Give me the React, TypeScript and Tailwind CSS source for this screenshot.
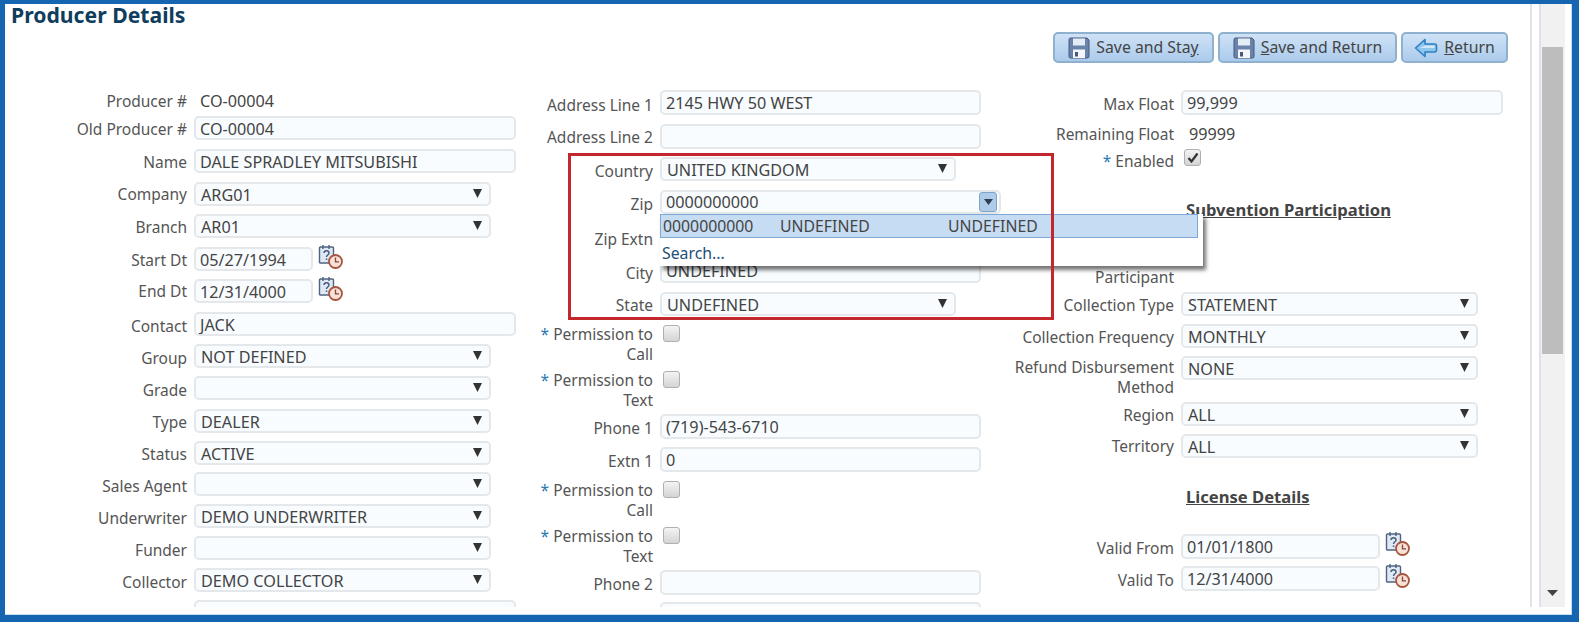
import React from "react";

const font = "font-['Noto_Sans','Liberation_Sans',sans-serif]";

function CalIcon() {
  return (
    <svg width="26" height="26" viewBox="0 0 26 26" className="block">
      <rect x="1.5" y="3" width="14" height="16" rx="1" fill="#dfe9f5" stroke="#4f6480" strokeWidth="1.4" />
      <path d="M5 1v4M11 1v4" stroke="#4f6480" strokeWidth="1.4" />
      <path d="M6 9c0-3 5-3 5 0 0 2-2.500 2-2.500 4M8.500 14.500v1.500" fill="none" stroke="#4a5f7c" strokeWidth="1.5" />
      <circle cx="17.500" cy="17.500" r="6.500" fill="#f6e2d6" stroke="#a9543f" strokeWidth="1.8" />
      <path d="M17.500 13.500v4.300h3.500" fill="none" stroke="#8a4433" strokeWidth="1.3" />
    </svg>
  );
}

function SaveIcon() {
  return (
    <svg width="22" height="22" viewBox="0 0 22 22" className="block shrink-0">
      <path d="M1 2.500Q1 1 2.500 1H19l2 2v16.500q0 1.500-1.500 1.500h-17Q1 21 1 19.500z" fill="#6a83aa" stroke="#46597f" />
      <rect x="5" y="1.500" width="12" height="7" fill="#e4ecf5" />
      <rect x="5" y="12.500" width="12" height="8.500" fill="#f4f6f9" />
      <rect x="7" y="15" width="3" height="4.500" fill="#46597c" />
    </svg>
  );
}

function BackIcon() {
  return (
    <svg width="24" height="22" viewBox="0 0 24 22" className="block shrink-0">
      <path d="M1.500 11 11 2.500V7h9.500q2 0 2 2v4q0 2-2 2H11v4.500z" fill="#8fc6ee" stroke="#2e7fc1" strokeWidth="1.6" strokeLinejoin="round" />
      <path d="M11 8.500h9.500v2.500H6z" fill="#cfe8fa" />
    </svg>
  );
}

function Arrow() {
  return (
    <svg width="9" height="9" viewBox="0 0 9 9" className="block">
      <polygon points="0,0 9,0 4.500,9" fill="#333" />
    </svg>
  );
}

const boxCls =
  "flex items-center border-2 border-[#e4e8eb] bg-[#f8fcff] rounded-[5px] text-[#444] text-[16.2px] overflow-hidden whitespace-nowrap";

function Box({ value, className }: { value?: string; className: string }) {
  return <div className={`${boxCls} pl-[4px] pt-[2px] ${className}`}>{value}</div>;
}

function Select({ value, className }: { value?: string; className: string }) {
  return (
    <div className={`${boxCls} pl-[5px] pr-[7px] pt-[2px] justify-between ${className}`}>
      <span>{value}</span>
      <span className="-mt-[4px]"><Arrow /></span>
    </div>
  );
}

function Check({ checked }: { checked?: boolean }) {
  return (
    <div className="w-[17px] h-[17px] rounded-[3px] border border-[#b0b0b0] bg-gradient-to-b from-[#f4f4f4] to-[#d4d4d4] flex items-center justify-center">
      {checked && (
        <svg width="12" height="11" viewBox="0 0 12 11">
          <path d="M1.500 6 4.500 9.500 10.500 1.500" fill="none" stroke="#333" strokeWidth="2.200" />
        </svg>
      )}
    </div>
  );
}

function Row({
  label,
  labelW,
  h,
  children,
  star,
  pt = "pt-[4px]",
}: {
  label: React.ReactNode;
  labelW: string;
  h: string;
  children?: React.ReactNode;
  star?: boolean;
  pt?: string;
}) {
  return (
    <div className={`flex items-start shrink-0 ${h}`}>
      <div className={`${labelW} ${pt} shrink-0 text-right leading-5 text-[#555]`}>
        {star && <span className="text-[#2a7ab0]">* </span>}
        {label}
      </div>
      <div className="ml-[7px]">{children}</div>
    </div>
  );
}

function Cal({ className }: { className: string }) {
  return <div className={className}><CalIcon /></div>;
}

function Btn({ icon, w, children }: { icon: React.ReactNode; w: string; children: React.ReactNode }) {
  return (
    <div className={`${w} h-[31px] flex items-center justify-center gap-[6px] rounded-[5px] border-2 border-[#8fb0cf] bg-gradient-to-b from-[#cfe2f6] to-[#abcbec] text-[#444] text-[15.8px]`}>
      {icon}
      <span>{children}</span>
    </div>
  );
}

function ColOne() {
  const w = "w-[182px]";
  const p3 = "pt-[3px]";
  const sel = "w-[297px] h-[24px]";
  const txt = "w-[322px] h-[24px]";
  return (
    <div className="w-[529px] shrink-0">
      <Row label="Producer #" labelW={w} h="h-[28px]" pt={p3}>
        <div className="pl-[6px] pt-[3px] leading-5 text-[#444] text-[16.2px]">CO-00004</div>
      </Row>
      <Row label="Old Producer #" labelW={w} h="h-[33px]" pt={p3}><Box value="CO-00004" className={txt} /></Row>
      <Row label="Name" labelW={w} h="h-[33px]" pt={p3}><Box value="DALE SPRADLEY MITSUBISHI" className={txt} /></Row>
      <Row label="Company" labelW={w} h="h-[32px]" pt="pt-[2px]"><Select value="ARG01" className={sel} /></Row>
      <Row label="Branch" labelW={w} h="h-[33px]" pt={p3}><Select value="AR01" className={sel} /></Row>
      <Row label="Start Dt" labelW={w} h="h-[32px]" pt={p3}>
        <div className="flex items-start">
          <Box value="05/27/1994" className="w-[119px] h-[24px]" />
          <Cal className="ml-[5px] -mt-[3px]" />
        </div>
      </Row>
      <Row label="End Dt" labelW={w} h="h-[33px]" pt="pt-[2px]">
        <div className="flex items-start">
          <Box value="12/31/4000" className="w-[119px] h-[24px]" />
          <Cal className="ml-[5px] -mt-[3px]" />
        </div>
      </Row>
      <Row label="Contact" labelW={w} h="h-[32px]"><Box value="JACK" className={txt} /></Row>
      <Row label="Group" labelW={w} h="h-[32px]"><Select value="NOT DEFINED" className={sel} /></Row>
      <Row label="Grade" labelW={w} h="h-[33px]"><Select className={sel} /></Row>
      <Row label="Type" labelW={w} h="h-[32px]" pt={p3}><Select value="DEALER" className={sel} /></Row>
      <Row label="Status" labelW={w} h="h-[31px]" pt={p3}><Select value="ACTIVE" className={sel} /></Row>
      <Row label="Sales Agent" labelW={w} h="h-[32px]"><Select className={sel} /></Row>
      <Row label="Underwriter" labelW={w} h="h-[32px]"><Select value="DEMO UNDERWRITER" className={sel} /></Row>
      <Row label="Funder" labelW={w} h="h-[32px]"><Select className={sel} /></Row>
      <Row label="Collector" labelW={w} h="h-[32px]"><Select value="DEMO COLLECTOR" className={sel} /></Row>
      <Row label="" labelW={w} h="h-[33px]"><Box className={txt} /></Row>
    </div>
  );
}

function ZipPopup() {
  return (
    <div className="absolute left-0 top-[24px] w-[543px] h-[52px] bg-white z-10 shadow-[3px_4px_4px_rgba(0,0,0,0.55)] text-[15.8px]">
      <div className="h-[24px] w-[538px] flex items-center bg-[#c6dcf2] border border-[#7ea8d8] pl-[2px] pt-[2px] text-[#444] whitespace-nowrap">
        <span className="w-[117px]">0000000000</span>
        <span className="w-[168px]">UNDEFINED</span>
        <span>UNDEFINED</span>
      </div>
      <div className="pl-[2px] pt-[5px] leading-5 text-[#1f4e79]">Search...</div>
    </div>
  );
}

function ColTwo() {
  const w = "w-[119px]";
  const txt = "w-[321px] h-[25px]";
  const sel = "w-[296px] h-[24px]";
  return (
    <div className="w-[476px] shrink-0 pt-[2px]">
      <Row label="Address Line 1" labelW={w} h="h-[34px]" pt="pt-[5px]"><Box value="2145 HWY 50 WEST" className={txt} /></Row>
      <Row label="Address Line 2" labelW={w} h="h-[33px]" pt="pt-[3px]"><Box className={txt} /></Row>
      <div className="relative">
        <div className="absolute left-[34px] top-[-4px] w-[486px] h-[167px] border-[3px] border-[#c1272d] z-20" />
        <Row label="Country" labelW={w} h="h-[33px]"><Select value="UNITED KINGDOM" className={sel} /></Row>
        <Row label="Zip" labelW={w} h="h-[36px]">
          <div className="relative">
            <div className={`${boxCls} w-[341px] h-[24px] pl-[4px] pr-[1px] pt-[1px] justify-between`}>
              <span>0000000000</span>
              <span className="w-[18px] h-[20px] mr-[1px] -mt-[1px] rounded-[3px] border border-[#7fa4cc] bg-[#aecbea] flex items-center justify-center">
                <svg width="9" height="6" viewBox="0 0 9 6"><polygon points="0,0 9,0 4.500,6" fill="#2d3e50" /></svg>
              </span>
            </div>
            <ZipPopup />
          </div>
        </Row>
        <Row label="Zip Extn" labelW={w} h="h-[32px]" pt="pt-[3px]"><Box className={txt} /></Row>
        <Row label="City" labelW={w} h="h-[34px]" pt="pt-[5px]"><Box value="UNDEFINED" className={txt} /></Row>
        <Row label="State" labelW={w} h="h-[32px]" pt="pt-[3px]"><Select value="UNDEFINED" className={sel} /></Row>
      </div>
      <Row star label={<>Permission to<br />Call</>} labelW={w} h="h-[46px]" pt="pt-0"><div className="ml-[3px] pt-[1px]"><Check /></div></Row>
      <Row star label={<>Permission to<br />Text</>} labelW={w} h="h-[44px]" pt="pt-0"><div className="ml-[3px] pt-[1px]"><Check /></div></Row>
      <Row label="Phone 1" labelW={w} h="h-[33px]"><Box value="(719)-543-6710" className={txt} /></Row>
      <Row label="Extn 1" labelW={w} h="h-[33px]"><Box value="0" className={txt} /></Row>
      <Row star label={<>Permission to<br />Call</>} labelW={w} h="h-[46px]" pt="pt-0"><div className="ml-[3px] pt-[1px]"><Check /></div></Row>
      <Row star label={<>Permission to<br />Text</>} labelW={w} h="h-[44px]" pt="pt-0"><div className="ml-[3px] pt-[1px]"><Check /></div></Row>
      <Row label="Phone 2" labelW={w} h="h-[32px]"><Box className={txt} /></Row>
      <Row label="" labelW={w} h="h-[32px]"><Box className={txt} /></Row>
    </div>
  );
}

function ColThree() {
  const w = "w-[164px]";
  const p3 = "pt-[3px]";
  const sel = "w-[297px] h-[24px]";
  return (
    <div className="w-[500px] shrink-0 pt-[2px]">
      <Row label="Max Float" labelW={w} h="h-[34px]"><Box value="99,999" className="w-[322px] h-[25px]" /></Row>
      <Row label="Remaining Float" labelW={w} h="h-[25px]" pt="pt-0"><div className="pl-[8px] leading-5 text-[#444] text-[16.2px]">99999</div></Row>
      <Row star label="Enabled" labelW={w} h="h-[51px]" pt="pt-[2px]"><div className="ml-[3px]"><Check checked /></div></Row>
      <div className="h-[67px] ml-[176px] leading-5 font-bold underline text-[#444] text-[16.6px]">Subvention Participation</div>
      <Row label="Participant" labelW={w} h="h-[25px]" pt="pt-0" />
      <Row label="Collection Type" labelW={w} h="h-[32px]" pt={p3}><Select value="STATEMENT" className={sel} /></Row>
      <Row label="Collection Frequency" labelW={w} h="h-[32px]" pt={p3}><Select value="MONTHLY" className={sel} /></Row>
      <Row label={<>Refund Disbursement<br />Method</>} labelW={w} h="h-[46px]" pt="pt-[1px]"><Select value="NONE" className={sel} /></Row>
      <Row label="Region" labelW={w} h="h-[32px]" pt={p3}><Select value="ALL" className={sel} /></Row>
      <Row label="Territory" labelW={w} h="h-[53px]" pt="pt-[2px]"><Select value="ALL" className={sel} /></Row>
      <div className="h-[47px] ml-[176px] leading-5 font-bold underline text-[#444] text-[16.6px]">License Details</div>
      <Row label="Valid From" labelW={w} h="h-[32px]">
        <div className="flex items-start"><Box value="01/01/1800" className="w-[199px] h-[25px]" /><Cal className="ml-[5px] -mt-[3px]" /></div>
      </Row>
      <Row label="Valid To" labelW={w} h="h-[32px]">
        <div className="flex items-start"><Box value="12/31/4000" className="w-[199px] h-[25px]" /><Cal className="ml-[5px] -mt-[3px]" /></div>
      </Row>
    </div>
  );
}

export default function App() {
  return (
    <div className={`${font} w-[1579px] h-[622px] border-t-[4px] border-l-[5px] border-r-[7px] border-b-[7px] border-[#1565b0] bg-white text-[15.5px] overflow-hidden shadow-[inset_-1px_-1px_0_#c8dcee]`}>
      <div className="flex h-[603px]">
        <div className="w-[1525px] shrink-0 h-[603px] overflow-hidden">
          <div className="pl-[6px] h-[28px] text-[#0f3d5e] font-bold text-[21.2px] leading-[22px]">Producer Details</div>
          <div className="flex justify-end gap-[4px] pr-[22px] h-[56px]">
            <Btn w="w-[161px]" icon={<SaveIcon />}>
              Save and Sta<span className="underline">y</span>
            </Btn>
            <Btn w="w-[179px]" icon={<SaveIcon />}>
              <span className="underline">S</span>ave and Return
            </Btn>
            <Btn w="w-[107px]" icon={<BackIcon />}>
              <span className="underline">R</span>eturn
            </Btn>
          </div>
          <div className="flex">
            <ColOne />
            <ColTwo />
            <ColThree />
          </div>
        </div>
        <div className="w-[2px] h-[603px] bg-[#dfe3ea] shrink-0" />
        <div className="w-[7px] shrink-0" />
        <div className="w-[26px] h-[603px] shrink-0 bg-[#f1f1f1] border-l-2 border-[#dde2ec] pl-[1px] pr-[2px] flex flex-col items-center">
          <div className="h-[43px] shrink-0" />
          <div className="w-[21px] h-[307px] shrink-0 bg-[#bdbdbd]" />
          <div className="flex-1" />
          <svg width="11" height="6" viewBox="0 0 11 6" className="mb-[11px] shrink-0"><polygon points="0,0 11,0 5.500,6" fill="#444" /></svg>
        </div>
      </div>
    </div>
  );
}
